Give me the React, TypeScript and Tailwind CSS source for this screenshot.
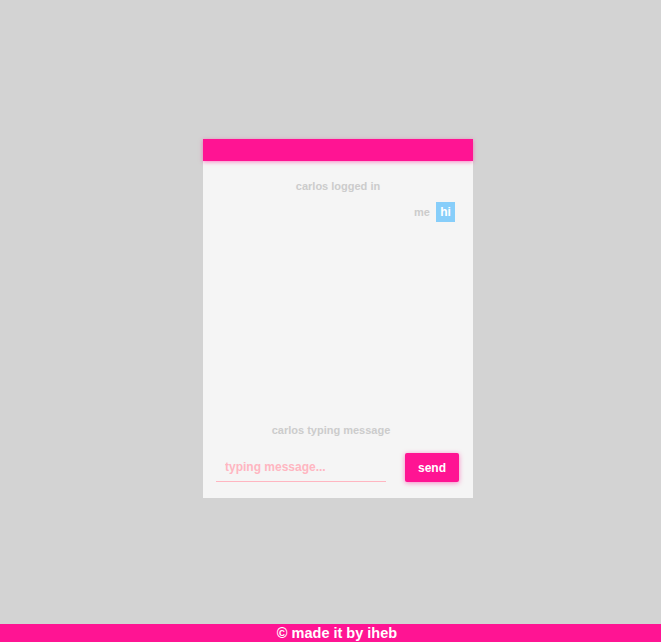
export default function App() {
  return (
    <div className="min-h-screen bg-[#d3d3d3] flex items-center justify-center pl-[15px] pb-[5px] font-['Liberation_Sans',sans-serif]">
      <div className="w-[270px] h-[359px] bg-[#f5f5f5] flex flex-col">
        <div className="h-[22px] bg-[#ff1493] shadow-[0_1px_4px_rgba(255,20,147,0.5)]" />
        <div className="flex-1 flex flex-col px-[13px]">
          <p className="mt-[18px] text-center text-[11px] font-bold text-[#cccccc] leading-[14px]">
            carlos logged in
          </p>
          <div className="mt-[9px] flex items-center justify-end gap-[6px] pr-[5px]">
            <span className="text-[11px] font-bold text-[#cccccc]">me</span>
            <span className="h-[20px] w-[19px] bg-[#87cefa] text-white text-[12px] font-bold flex items-center justify-center">
              hi
            </span>
          </div>
          <div className="flex-1" />
          <p className="pr-[14px] text-center text-[11px] font-bold text-[#cccccc] leading-[14px]">
            carlos typing message
          </p>
          <div className="mt-[16px] mb-[16px] flex items-end justify-between">
            <div className="w-[170px] h-[29px] border-b border-b-[#ffb6c1]">
              <input
                placeholder="typing message..."
                className="w-full h-full px-[9px] bg-transparent text-[12px] font-bold text-[#ffb6c1] placeholder:text-[#ffb6c1] outline-none"
              />
            </div>
            <button className="w-[54px] h-[29px] mr-[1px] rounded-[2px] bg-[#ff1493] text-white text-[12px] font-bold shadow-[0_1px_5px_rgba(255,20,147,0.5)]">
              send
            </button>
          </div>
        </div>
      </div>
      <div className="fixed bottom-0 left-0 right-0 h-[18px] bg-[#ff1493] pl-[13px] flex items-center justify-center text-white text-[14.5px] font-bold leading-none">
        © made it by iheb
      </div>
    </div>
  );
}
